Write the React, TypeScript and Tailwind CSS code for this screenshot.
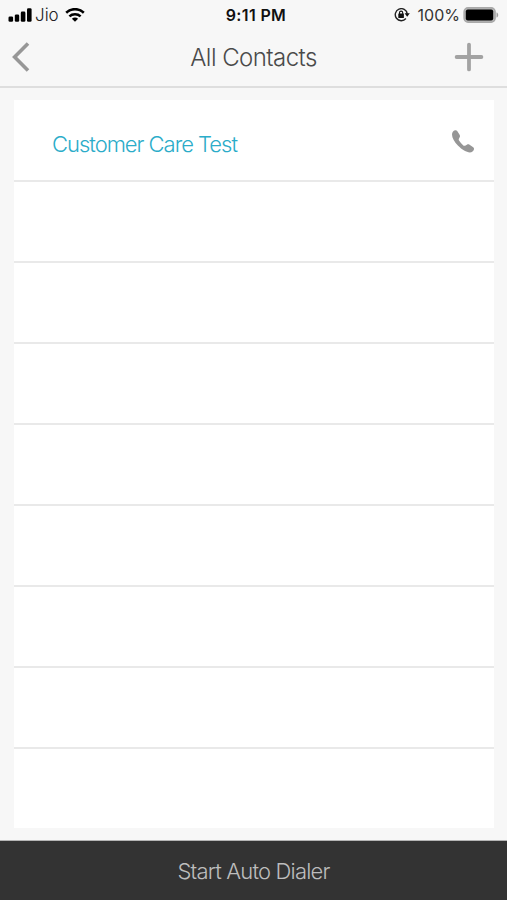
import React from 'react';

interface Contact {
  id: number;
  name: string;
}

const contacts: Contact[] = [{ id: 1, name: 'Customer Care Test' }];

const ROW_COUNT = 9;

function SignalIcon() {
  return (
    <svg width="24" height="15" viewBox="0 0 24 15" className="shrink-0">
      <rect x="0.5" y="8.5" width="4.6" height="5.2" rx="1.3" />
      <rect x="6.8" y="6.4" width="4.4" height="7.3" rx="1.3" />
      <rect x="12.8" y="3.6" width="4.6" height="10.1" rx="1.3" />
      <rect x="19" y="0.3" width="4.6" height="13.4" rx="1.3" />
    </svg>
  );
}

function WifiIcon() {
  return (
    <svg width="20" height="15" viewBox="0 0 20 15" className="shrink-0">
      <g fill="none" stroke="#000" strokeWidth="2.6">
        <path d="M1.2 4.7C6.2 0 13.8 0 18.8 4.7" />
        <path d="M4.4 8.4C7.5 5.6 12.5 5.6 15.6 8.4" />
      </g>
      <path d="M6.9 10.7C8.7 9.1 11.3 9.1 13.1 10.7L10 13.8Z" />
    </svg>
  );
}

function RotationLockIcon() {
  return (
    <svg width="16" height="14" viewBox="0 0 16 14" className="shrink-0">
      <path d="M11.9 10.5A6 6 0 1 1 13.2 5.8" fill="none" stroke="#222" strokeWidth="1.4" />
      <path d="M10.6 5.3H15.8L13.2 8.7Z" fill="#111" />
      <rect x="4.3" y="5.6" width="5.6" height="4.4" rx="0.5" fill="#111" />
      <path d="M5.5 5.9V4.7A1.6 1.6 0 0 1 8.7 4.7V5.9" fill="none" stroke="#111" strokeWidth="1.1" />
    </svg>
  );
}

function BatteryIcon() {
  return (
    <svg width="36" height="17" viewBox="0 0 36 17" className="shrink-0">
      <rect x="1.1" y="0.8" width="31" height="14.4" rx="4" fill="#b4b4b4" stroke="#a9a9a9" strokeWidth="1.5" />
      <rect x="2.8" y="2.5" width="27.4" height="11" rx="2" fill="#000" />
      <path d="M33.5 5.4C35.8 5.9 35.8 9.9 33.5 10.4Z" fill="#a0a0a0" />
    </svg>
  );
}

function StatusBar() {
  return (
    <div className="grid h-7 grid-cols-[1fr_auto_1fr] items-center pt-0.5 pr-[3px] pl-2 text-black">
      <div className="flex items-center">
        <SignalIcon />
        <span className="ml-[3px] text-[17px] leading-5 font-light text-[#222]">Jio</span>
        <span className="ml-[6px]"><WifiIcon /></span>
      </div>
      <div className="text-base leading-5 font-semibold tracking-[0.35px] whitespace-nowrap text-[#111]">9:11 PM</div>
      <div className="flex items-center justify-end pr-[5px]">
        <RotationLockIcon />
        <span className="mr-[3px] ml-2 text-base leading-5 text-[#333]">100%</span>
        <BatteryIcon />
      </div>
    </div>
  );
}

function NavBar() {
  return (
    <div className="grid h-[58px] grid-cols-[1fr_auto_1fr] items-center pr-[23px] pl-3">
      <button aria-label="Back">
        <svg width="18" height="30" viewBox="0 0 18 30" fill="none" stroke="#979797" strokeWidth="3.6">
          <path d="M16 1.6L2.6 15L16 28.4" />
        </svg>
      </button>
      <h1 className="pt-0.5 pl-[11px] text-2xl font-light tracking-[-0.55px] text-[#4a4a4a]">All Contacts</h1>
      <button aria-label="Add contact" className="justify-self-end">
        <svg width="30" height="30" viewBox="0 0 30 30" fill="none" stroke="#a3a3a3" strokeWidth="3.8" strokeLinecap="round">
          <path d="M15 2.6V27.4M2.6 15H27.4" />
        </svg>
      </button>
    </div>
  );
}

function ContactRow({ contact }: { contact?: Contact }) {
  return (
    <li className="flex h-[81px] items-center justify-between border-b-2 border-[#e9e9e9] pr-[19px] pl-[38px] first:h-[82px] last:h-[79px] last:border-b-0">
      {contact && (
        <>
          <span className="pt-2 text-[22px] font-light tracking-[-1.02px] text-[#2bacc9]">{contact.name}</span>
          <button aria-label="Call" className="pt-0.5">
            <svg width="24" height="24" viewBox="0 0 24 24" fill="#969696">
              <path d="M4 1.3C2.3 1.7 1 3.3 1 5.4C1 8.7 3.5 13.1 7.1 16.8C10.9 20.6 15.5 23.4 18.8 23.4C20.9 23.4 22.6 22 23 20.2C23.2 19.4 22.9 18.7 22.2 18.2L18.6 15.8C17.7 15.2 16.7 15.2 15.9 15.7L14.1 16.7C13.5 17 12.8 16.8 12.3 16.4C10.5 14.8 9.2 13.2 8 11.5C7.6 10.9 7.6 10.3 7.9 9.7L8.8 8.1C9.2 7.3 9.1 6.5 8.6 5.7L6.2 2C5.7 1.3 4.9 1.1 4 1.3Z" />
            </svg>
          </button>
        </>
      )}
    </li>
  );
}

export default function App() {
  const rows = Array.from({ length: ROW_COUNT }, (_, i) => contacts[i]);

  return (
    <div className="flex h-[900px] w-[507px] flex-col bg-[#f7f7f7] font-['Inter','Liberation_Sans',sans-serif]">
      <header className="border-b-2 border-[#dedede]">
        <StatusBar />
        <NavBar />
      </header>

      <main className="flex-1 px-3.5 pt-3">
        <ul className="w-[480px] bg-white">
          {rows.map((contact, i) => (
            <ContactRow key={i} contact={contact} />
          ))}
        </ul>
      </main>

      <button className="h-[60px] border-t border-[#b5b5b5] bg-[#333] pt-0.5 text-[22px] font-light tracking-[-0.82px] text-[#bdbdbd]">
        Start Auto Dialer
      </button>
    </div>
  );
}
